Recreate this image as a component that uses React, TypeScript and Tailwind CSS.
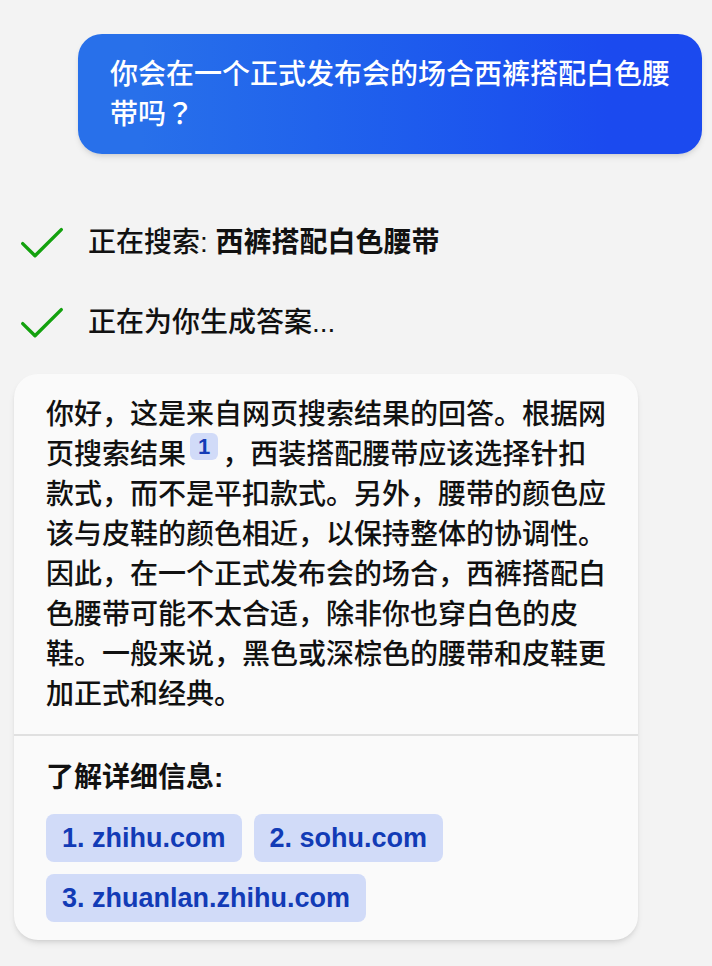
const SOURCES = ["zhihu.com", "sohu.com", "zhuanlan.zhihu.com"];

function CheckIcon() {
  return (
    <svg viewBox="0 0 44 32" className="w-11 h-8 shrink-0" fill="none" aria-hidden="true">
      <path
        d="M2.7 16.6 15 28.8 41.3 2.6"
        stroke="#13a10e"
        strokeWidth="3.4"
        strokeLinecap="round"
        strokeLinejoin="round"
      />
    </svg>
  );
}

export default function App() {
  return (
    <main
      lang="zh-CN"
      className="min-h-screen bg-[#f3f3f3] pt-[34px] pb-[26px] text-[28px] leading-10 font-medium text-[#111111] font-['Liberation_Sans','Noto_Sans_CJK_SC',sans-serif]"
    >
      {/* User message */}
      <div className="ml-[78px] mr-[10px] rounded-3xl bg-linear-to-r from-[#2870ea] from-10% to-[#1b4aef] to-85% px-8 pt-[21px] pb-[19px] text-white shadow-md">
        你会在一个正式发布会的场合西裤搭配白色腰带吗
        <span lang="zh-TW" className="font-['Noto_Sans_CJK_TC',sans-serif] leading-none">？</span>
      </div>

      {/* Progress */}
      <ul className="mt-[69px] space-y-10 pl-5">
        <li className="flex items-center gap-6">
          <CheckIcon />
          <span>
            正在搜索: <strong>西裤搭配白色腰带</strong>
          </span>
        </li>
        <li className="flex items-center gap-6">
          <CheckIcon />
          <span>正在为你生成答案...</span>
        </li>
      </ul>

      {/* Answer */}
      <article className="mt-[31px] ml-[14px] mr-[74px] rounded-3xl bg-[#fafafa] shadow-md">
        <p className="px-8 pt-[21px] pb-[19px]">
          你好，这是来自网页搜索结果的回答。根据网页搜索结果
          <a href="#source-1" className="mx-1 rounded-md bg-[#d1dbf8] px-2 py-px align-super text-[22px] leading-none font-bold text-[#123bb6]">
            1
          </a>
          ，西装搭配腰带应该选择针扣款式，而不是平扣款式。另外，腰带的颜色应该与皮鞋的颜色相近，以保持整体的协调性。因此，在一个正式发布会的场合，西裤搭配白色腰带可能不太合适，除非你也穿白色的皮鞋。一般来说，黑色或深棕色的腰带和皮鞋更加正式和经典。
        </p>
        <footer className="border-t-2 border-[#e0e0e0] px-8 pt-[22px] pb-[18px]">
          <h2 className="font-bold">了解详细信息:</h2>
          <div className="mt-4 flex flex-wrap gap-3">
            {SOURCES.map((source, i) => (
              <a
                key={source}
                id={`source-${i + 1}`}
                href={`https://${source}`}
                className="rounded-lg bg-[#d1dbf8] px-4 py-1 text-[27px] font-bold text-[#123bb6]"
              >
                {i + 1}. {source}
              </a>
            ))}
          </div>
        </footer>
      </article>
    </main>
  );
}
